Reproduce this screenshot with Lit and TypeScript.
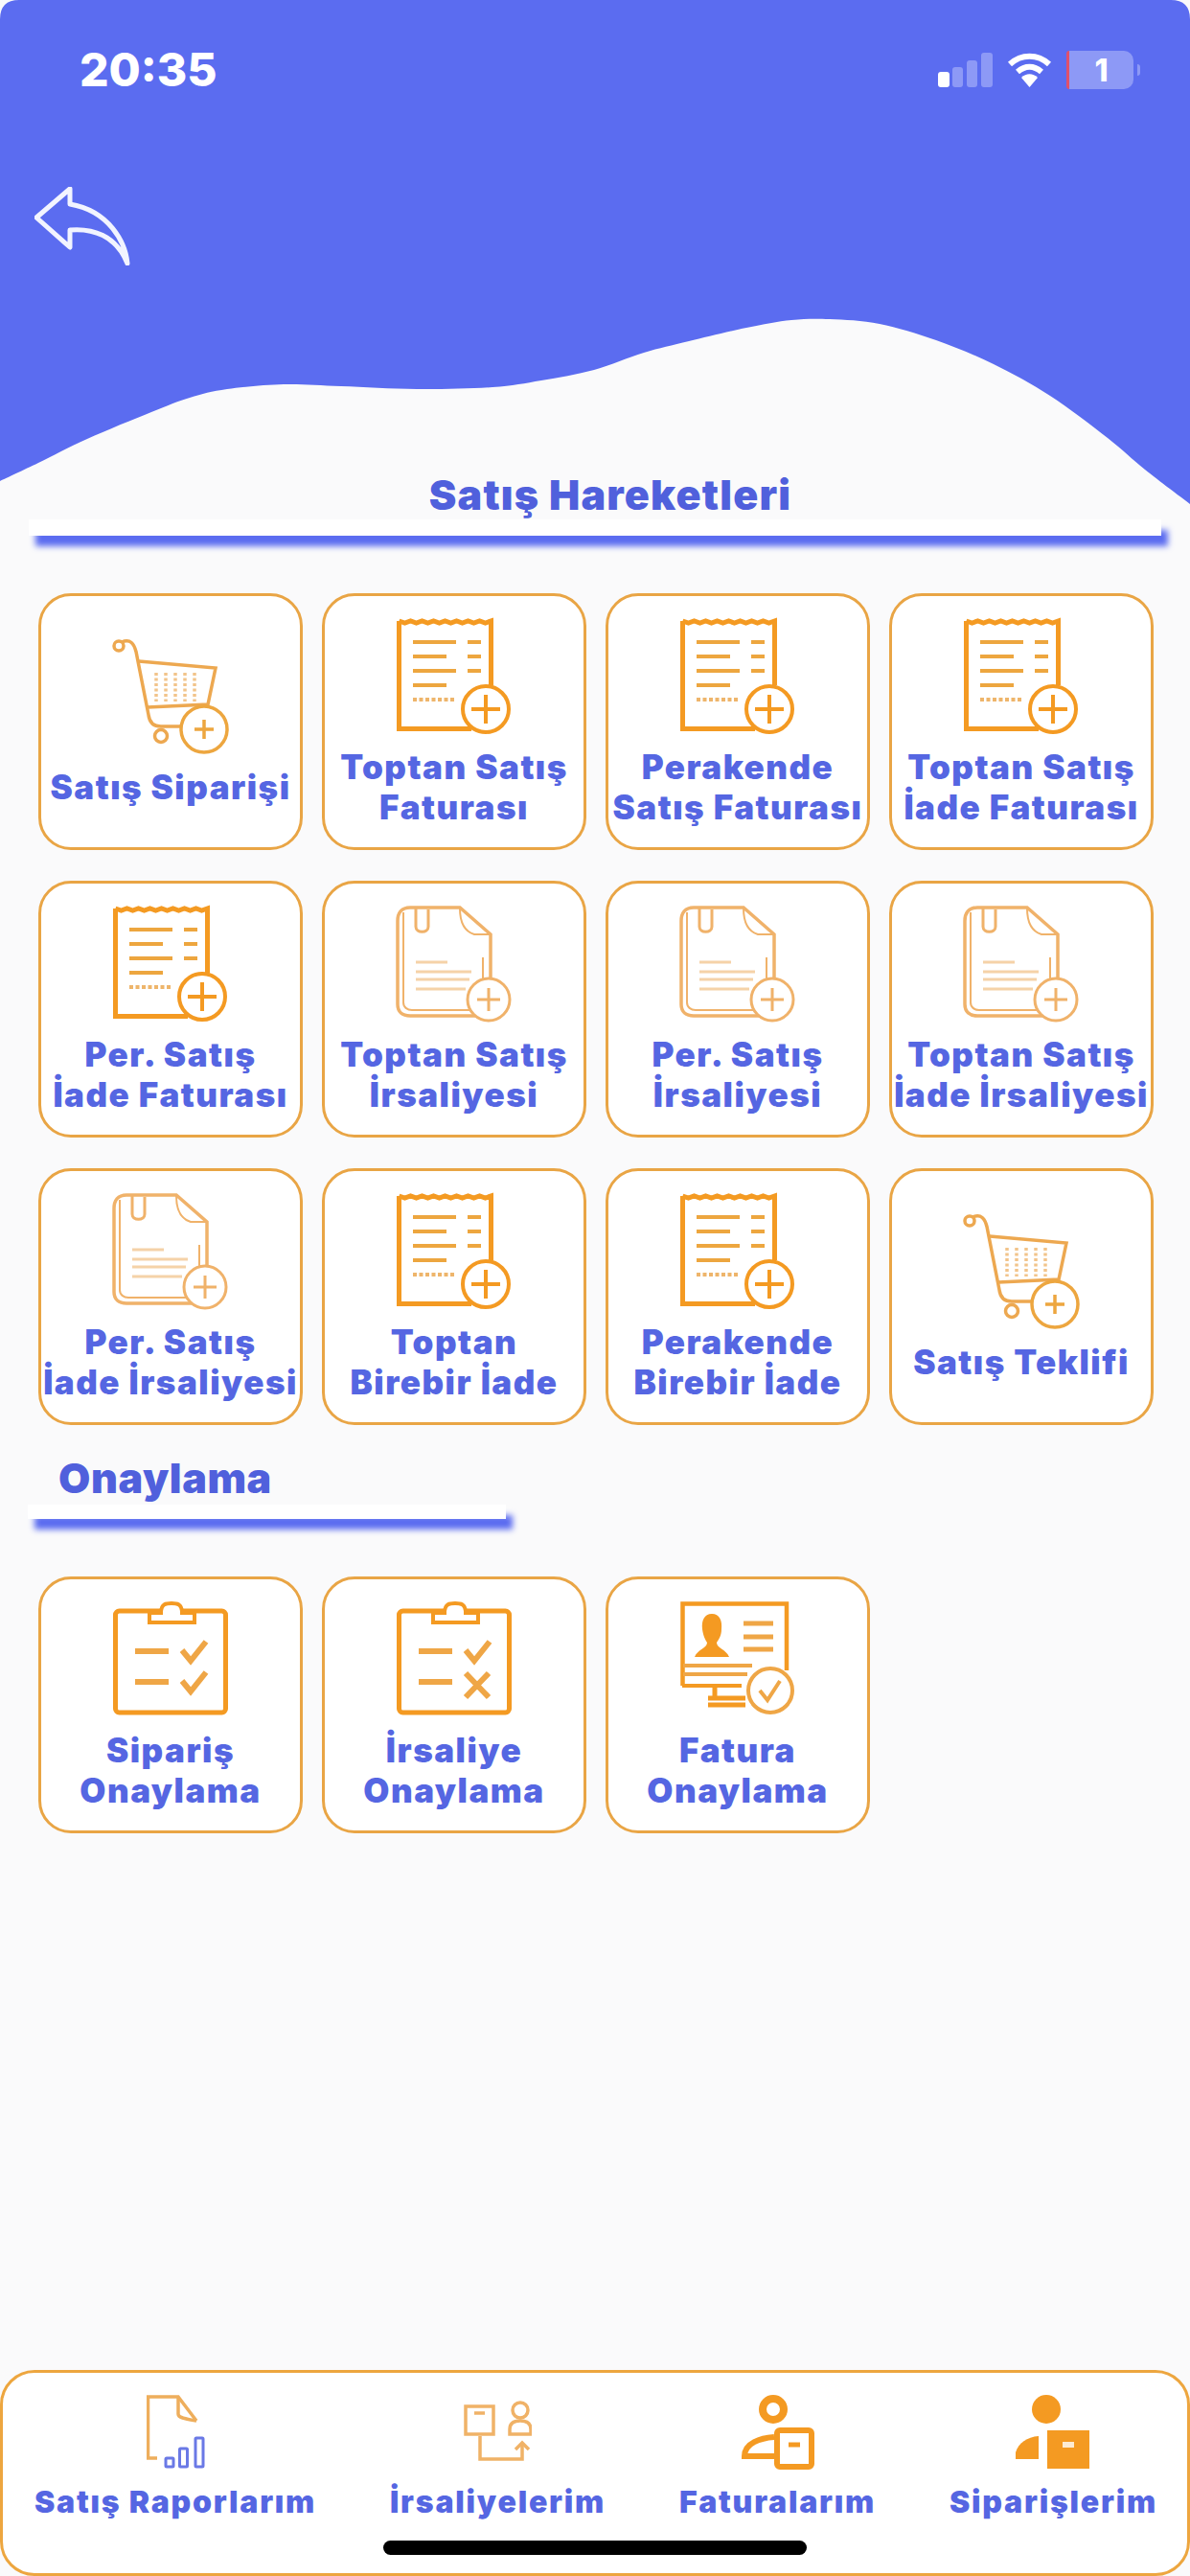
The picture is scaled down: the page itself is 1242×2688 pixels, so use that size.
import { LitElement, html, css, svg } from "lit";
import { customElement } from "lit/decorators.js";

const ORANGE = "#f49a22";
const SOFT = "#f0b26a";
const BLUE = "#5b6cf0";

// edge of the header, read off the screenshot
const WAVE: [number, number][] = [
  [0, 502], [40, 483], [91, 458], [158, 430], [198, 415], [237, 406], [296, 401],
  [356, 403], [435, 406], [514, 404], [565, 397], [620, 386], [672, 368], [719, 356],
  [779, 342], [826, 334], [866, 333], [918, 338], [977, 355], [1037, 380], [1096, 413],
  [1156, 457], [1195, 490], [1242, 526],
];

function wavePath(points: [number, number][]) {
  let d = `M${points[0][0]} ${points[0][1]}`;
  for (let i = 0; i < points.length - 1; i++) {
    const p0 = points[Math.max(i - 1, 0)];
    const p1 = points[i];
    const p2 = points[i + 1];
    const p3 = points[Math.min(i + 2, points.length - 1)];
    const c1x = p1[0] + (p2[0] - p0[0]) / 6;
    const c1y = p1[1] + (p2[1] - p0[1]) / 6;
    const c2x = p2[0] - (p3[0] - p1[0]) / 6;
    const c2y = p2[1] - (p3[1] - p1[1]) / 6;
    d += `C${c1x} ${c1y} ${c2x} ${c2y} ${p2[0]} ${p2[1]}`;
  }
  return d + "V20Q1242 0 1222 0H20Q0 0 0 20Z";
}

const plus = (cx: number, cy: number, r: number, arm: number, color = ORANGE, w = 4) => svg`
  <circle cx=${cx} cy=${cy} r=${r} fill="#fff" stroke=${color} stroke-width=${w} />
  <path d="M${cx - arm} ${cy}H${cx + arm}M${cx} ${cy - arm}V${cy + arm}" stroke=${color} stroke-width=${w} fill="none" />
`;

/* invoice with zigzag top edge */
const receipt = html`<svg class="icon" viewBox="0 0 120 120">
  <path d="M2.500 3 l6 2 6-2 6 2 6-2 6 2 6-2 6 2 6-2 6 2 6-2 6 2 6-2 6 2 6-2 6 2 6-2V70M78 115.500H2.500V3" fill="none" stroke=${ORANGE} stroke-width="5" />
  <path d="M17 25H62M74 25H88M17 40H52M74 40H88M17 55H62M74 55H88M17 70H52" stroke="#eda63f" stroke-width="4" fill="none" />
  <path d="M17 85H62" stroke="#eeb56b" stroke-width="4" stroke-dasharray="4 2.500" fill="none" />
  ${plus(93, 95, 24, 15, ORANGE, 4)}
</svg>`;

const cart = html`<svg class="icon" viewBox="0 0 120 120">
  <g fill="none" stroke="#eda850" stroke-width="3.500">
    <circle cx="6" cy="8" r="5" />
    <path d="M9 4C18 0 22 6 24 14L37 80C38 88 42 92 50 92H78" />
    <path d="M27 24L107 31L99 69L36 72" />
    <circle cx="50" cy="102" r="6.500" />
  </g>
  <path d="M45 36V66M55 36V66M65 36V66M75 36V66M85 36V66" stroke="#f2c48a" stroke-width="3.500" stroke-dasharray="3 2.500" fill="none" />
  ${plus(95, 95, 24, 10, "#eda63f", 3.5)}
</svg>`;

/* clipped sheet, drawn paler than the others */
const clipped = html`<svg class="icon" viewBox="0 0 120 120">
  <g fill="none" stroke=${SOFT}>
    <path d="M66 2H14C5 2 1 8 1 16V103C1 111 6 115 14 115H84C92 115 98 111 98 103V30Z" stroke-width="3.500" />
    <path d="M7 7V101C7 106 11 109 16 109H80" stroke-width="2" />
    <path d="M66 3C66 14 68 26 81 30H98" stroke-width="2" />
    <path d="M20 2V22C20 29 33 29 33 22V4" stroke-width="3" />
    <path d="M90 54V84" stroke-width="2" />
  </g>
  <path d="M20 59H53M20 69H78M20 77H76M20 87H72" stroke="#f5d2a8" stroke-width="3" fill="none" />
  ${plus(96, 98, 22, 12, SOFT, 3)}
</svg>`;

const clipboard = (second: any) => html`<svg class="icon" viewBox="0 0 120 120">
  <rect x="2.500" y="10" width="115" height="106" rx="4" fill="none" stroke=${ORANGE} stroke-width="5" />
  <path d="M38 12H50C50 2 56 2 61 2C66 2 72 2 72 12H85V22H38Z" fill="#fff" stroke=${ORANGE} stroke-width="4" />
  <path d="M23 52H58M23 84H58" stroke="#efa646" stroke-width="6" fill="none" />
  <path d="M72 51L81 62L97 42" stroke="#efa646" stroke-width="6" fill="none" />
  ${second}
</svg>`;

const checkRow = svg`<path d="M72 83L81 94L97 74" stroke="#efa646" stroke-width="6" fill="none" />`;
const crossRow = svg`<path d="M72 75L96 100M96 75L72 100" stroke="#efa646" stroke-width="6" fill="none" />`;

const monitor = html`<svg class="icon" viewBox="0 0 120 120">
  <path d="M2.500 88V2.500H111V72" fill="none" stroke=${ORANGE} stroke-width="4.500" />
  <path d="M2 88H64" stroke=${ORANGE} stroke-width="4" />
  <path d="M33 13C25 13 22 20 23 29C24 36 26 40 28 43C28 49 18 50 15 58H51C48 50 38 49 38 43C40 40 43 36 43 29C44 20 41 13 33 13Z" fill=${ORANGE} />
  <path d="M66 23H97M66 37H97M66 50H97" stroke="#efa646" stroke-width="5" />
  <path d="M3 67H75M3 76H70" stroke="#efa646" stroke-width="4" />
  <path d="M36 88V100M29 101H68M29 108H68" stroke=${ORANGE} stroke-width="5" fill="none" />
  <circle cx="94" cy="93" r="23" fill="#fff" stroke="#efa646" stroke-width="4" />
  <path d="M83 93L91 103L104 83" stroke="#efa646" stroke-width="4" fill="none" />
</svg>`;

const navReports = html`<svg class="nav-icon" width="61" height="78" viewBox="0 0 61 78">
  <path d="M11 66H1.500V2H33L52 27" fill="none" stroke="#eeae5c" stroke-width="3.500" />
  <path d="M33 2V20C33 24 40 25 52 27" fill="none" stroke="#eeae5c" stroke-width="3.500" />
  <g fill="none" stroke="#6a79e6" stroke-width="3">
    <rect x="20" y="66" width="8" height="9" rx="1" />
    <rect x="34.500" y="56" width="8" height="19" rx="1" />
    <rect x="51" y="45" width="8" height="30" rx="1" />
  </g>
</svg>`;

const navDelivery = html`<svg class="nav-icon" width="71" height="78" viewBox="0 0 71 78">
  <g fill="none" stroke="#f0b267" stroke-width="3.500">
    <rect x="2" y="12" width="29" height="29" />
    <path d="M11 19H22" />
    <circle cx="59" cy="16" r="8" />
    <path d="M48 41V36C48 30 52 27 59 27C66 27 70 30 70 36V41Z" />
    <path d="M17 43V67H61V51" />
    <path d="M54 57L61 50L68 57" />
  </g>
</svg>`;

const navInvoices = html`<svg class="nav-icon" width="76" height="78" viewBox="0 0 76 78">
  <circle cx="33" cy="15" r="11" fill="none" stroke=${ORANGE} stroke-width="8" />
  <path d="M34 44C20 45 3 50 3 64H34" fill="#fff" stroke=${ORANGE} stroke-width="6" />
  <rect x="37" y="37" width="36" height="38" rx="3" fill="#fff" stroke=${ORANGE} stroke-width="6" />
  <path d="M49 52H61" stroke=${ORANGE} stroke-width="5" />
</svg>`;

const navOrders = html`<svg class="nav-icon" width="78" height="78" viewBox="0 0 78 78">
  <circle cx="32" cy="15" r="15" fill=${ORANGE} />
  <path d="M0 67V60C3 50 12 44 24 43V67Z" fill=${ORANGE} />
  <path d="M33 37H77V77H33Z" fill=${ORANGE} />
  <rect x="49" y="49" width="12" height="6" fill="#fdebd3" />
</svg>`;

const salesCards = [
  { lines: ["Satış Siparişi"], icon: cart },
  { lines: ["Toptan Satış", "Faturası"], icon: receipt },
  { lines: ["Perakende", "Satış Faturası"], icon: receipt },
  { lines: ["Toptan Satış", "İade Faturası"], icon: receipt },
  { lines: ["Per. Satış", "İade Faturası"], icon: receipt },
  { lines: ["Toptan Satış", "İrsaliyesi"], icon: clipped },
  { lines: ["Per. Satış", "İrsaliyesi"], icon: clipped },
  { lines: ["Toptan Satış", "İade İrsaliyesi"], icon: clipped },
  { lines: ["Per. Satış", "İade İrsaliyesi"], icon: clipped },
  { lines: ["Toptan", "Birebir İade"], icon: receipt },
  { lines: ["Perakende", "Birebir İade"], icon: receipt },
  { lines: ["Satış Teklifi"], icon: cart },
];

const approvalCards = [
  { lines: ["Sipariş", "Onaylama"], icon: clipboard(checkRow) },
  { lines: ["İrsaliye", "Onaylama"], icon: clipboard(crossRow) },
  { lines: ["Fatura", "Onaylama"], icon: monitor },
];

const navItems = [
  { label: "Satış Raporlarım", icon: navReports },
  { label: "İrsaliyelerim", icon: navDelivery },
  { label: "Faturalarım", icon: navInvoices },
  { label: "Siparişlerim", icon: navOrders },
];

@customElement("app-root")
export class AppRoot extends LitElement {
  static styles = css`
    :host {
      display: flex;
      flex-direction: column;
      position: relative;
      isolation: isolate;
      width: 1242px;
      height: 2688px;
      overflow: hidden;
      background: #fafafb;
      font-family: Inter, "Noto Sans", sans-serif;
    }
    .wave {
      position: absolute;
      top: 0;
      left: 0;
      z-index: -1;
    }

    .status {
      display: flex;
      justify-content: space-between;
      align-items: center;
      height: 40px;
      margin-top: 53px;
      padding: 0 52px 0 83px;
    }
    .time {
      color: #fff;
      font-size: 48px;
      font-weight: 800;
      line-height: 40px;
    }
    .status-icons {
      display: flex;
      align-items: center;
      gap: 15px;
    }
    .battery {
      display: flex;
      align-items: center;
      justify-content: center;
      box-sizing: border-box;
      width: 70px;
      height: 40px;
      border-left: 3px solid #e0506b;
      border-radius: 3px 10px 10px 3px;
      background: #8d99f6;
      color: #fff;
      font-size: 32px;
      font-weight: 800;
    }
    .nub {
      width: 3px;
      height: 12px;
      margin-left: -11px;
      border-radius: 0 3px 3px 0;
      background: #8d99f6;
    }

    .back {
      display: block;
      margin: 102px 0 0 36px;
    }

    .title {
      margin: 214px 0 0;
      padding-left: 32px;
      color: #5060dc;
      font-size: 43px;
      font-weight: 900;
      letter-spacing: 1.2px;
      line-height: 50px;
      text-align: center;
    }
    .rule {
      height: 17px;
      margin: 1px 30px 0;
      background: #fff;
      box-shadow: 7px 11px 6px #5b6cf0;
    }
    .sub-title {
      margin: 30px 0 0 61px;
      color: #5060dc;
      font-size: 43px;
      font-weight: 900;
      letter-spacing: 0.6px;
      line-height: 50px;
    }
    .rule.short {
      width: 499px;
      height: 15px;
      margin: 3px 0 0 29px;
    }

    .grid {
      display: grid;
      grid-template-columns: repeat(4, 276px);
      grid-auto-rows: 268px;
      gap: 32px 20px;
      margin: 60px 0 0 40px;
    }
    .card {
      display: flex;
      flex-direction: column;
      align-items: center;
      justify-content: center;
      box-sizing: border-box;
      padding-top: 2px;
      border: 3px solid #e9a545;
      border-radius: 34px;
      background: #fff;
    }
    .icon {
      display: block;
      width: 120px;
      height: 120px;
      flex: none;
      overflow: visible;
    }
    .label {
      margin-top: 14px;
      color: #5566e2;
      font-size: 35px;
      font-weight: 900;
      letter-spacing: 1.5px;
      line-height: 42px;
      text-align: center;
      white-space: nowrap;
    }

    .nav {
      display: flex;
      justify-content: space-between;
      position: relative;
      box-sizing: border-box;
      height: 215px;
      margin-top: auto;
      padding: 23px 31px 0 33px;
      border: 3px solid #eda63f;
      border-radius: 36px;
      background: #fff;
    }
    .nav-item {
      display: flex;
      flex-direction: column;
      align-items: center;
      gap: 16px;
    }
    .nav-icon {
      display: block;
    }
    .nav-label {
      color: #5566e2;
      font-size: 32px;
      font-weight: 900;
      letter-spacing: 1.8px;
      line-height: 36px;
      white-space: nowrap;
    }
    .home {
      position: absolute;
      left: 397px;
      bottom: 19px;
      width: 442px;
      height: 15px;
      border-radius: 8px;
      background: #000;
    }
  `;

  private renderCard(card: { lines: string[]; icon: unknown }) {
    return html`<div class="card">
      ${card.icon}
      <div class="label">${card.lines.map((l) => html`<div>${l}</div>`)}</div>
    </div>`;
  }

  render() {
    return html`
      <svg class="wave" width="1242" height="530" viewBox="0 0 1242 530">
        <path fill=${BLUE} d=${wavePath(WAVE)} />
      </svg>

      <div class="status">
        <div class="time">20:35</div>
        <div class="status-icons">
          <svg width="57" height="36" viewBox="0 0 57 36">
            <rect x="0" y="20" width="12" height="16" rx="3" fill="#fff" />
            <rect x="15" y="15" width="11" height="21" rx="3" fill="#8d99f6" />
            <rect x="30" y="8" width="11" height="28" rx="3" fill="#8d99f6" />
            <rect x="45" y="0" width="12" height="36" rx="3" fill="#8d99f6" />
          </svg>
          <svg width="47" height="36" viewBox="0 0 47 36">
            <path d="M3 12C15 1 32 1 44 12M11 20C19 13 28 13 36 20" fill="none" stroke="#fff" stroke-width="6" />
            <path d="M15 26C20 21 27 21 32 26L23.500 36Z" fill="#fff" />
          </svg>
          <div class="battery">1</div>
          <div class="nub"></div>
        </div>
      </div>

      <svg class="back" width="100" height="82" viewBox="0 0 100 82">
        <path
          d="M37 2L2 32L37 63V45C60 43 85 50 97 80C95 58 78 25 37 18Z"
          fill="none"
          stroke="#f2f4ff"
          stroke-width="5"
          stroke-linejoin="round"
        />
      </svg>

      <h1 class="title">Satış Hareketleri</h1>
      <div class="rule"></div>
      <div class="grid">${salesCards.map((c) => this.renderCard(c))}</div>

      <h2 class="sub-title">Onaylama</h2>
      <div class="rule short"></div>
      <div class="grid">${approvalCards.map((c) => this.renderCard(c))}</div>

      <div class="nav">
        ${navItems.map(
          (n) => html`<div class="nav-item">
            ${n.icon}
            <div class="nav-label">${n.label}</div>
          </div>`
        )}
        <div class="home"></div>
      </div>
    `;
  }
}
